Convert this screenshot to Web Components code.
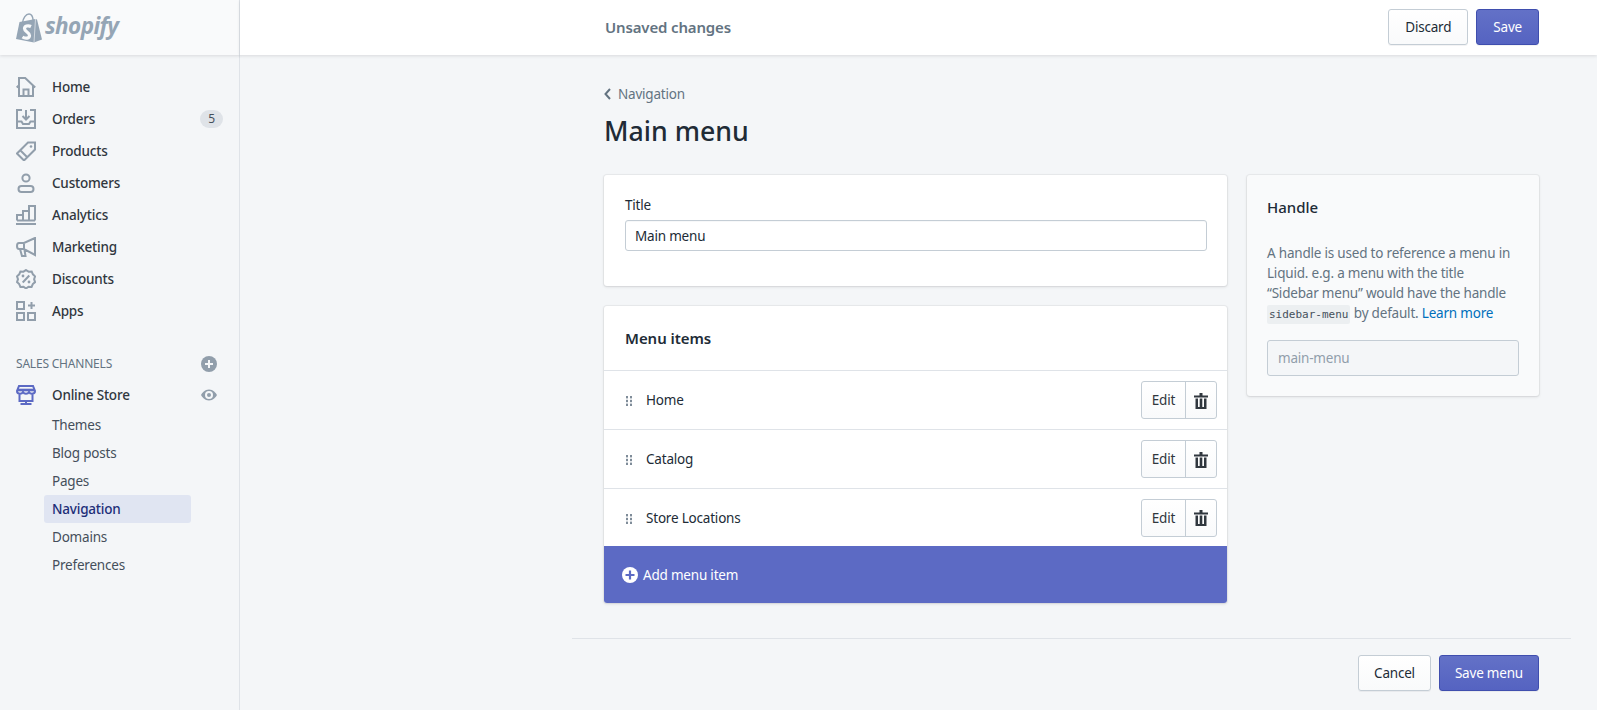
<!DOCTYPE html>
<html>
<head>
<meta charset="utf-8">
<title>Main menu</title>
<style>
  html, body { margin: 0; height: 100%; }
  body {
    font-family: "Noto Sans", "Open Sans", sans-serif;
    font-size: 13.5px;
    letter-spacing: -.2px;
    color: #212b36;
    background: #f4f6f8;
    overflow: hidden;
  }
  svg { display: block; }
</style>
</head>
<body>

<admin-shell>
  <admin-sidebar slot="sidebar">
    <nav-item label="Home">
      <svg viewBox="0 0 20 20" width="20" height="20" fill="none" stroke="#919eab" stroke-width="2"><path d="M.7 10.500 3 8.300V1h6.200l10 9.500M3 8v11h14V9M7.500 19v-6.500h5V19"/></svg>
    </nav-item>
    <nav-item label="Orders" badge="5">
      <svg viewBox="0 0 20 20" width="20" height="20" fill="none" stroke="#919eab" stroke-width="2"><path d="M6 1H1v18h18V1h-5M1 12.500h4.500l1.500 2.500h6l1.500-2.500H19M10 1v9M6.500 7l3.500 3.500L13.500 7"/></svg>
    </nav-item>
    <nav-item label="Products">
      <svg viewBox="0 0 20 20" width="20" height="20" fill="none" stroke="#919eab" stroke-width="2"><path d="M12 1.500h7v7L8 19.500 1 12.500zM4.500 9.500l7 7"/><circle cx="15" cy="5.500" r="1.300" fill="#919eab" stroke="none"/></svg>
    </nav-item>
    <nav-item label="Customers">
      <svg viewBox="0 0 20 20" width="20" height="20" fill="none" stroke="#919eab" stroke-width="2"><circle cx="10" cy="5" r="3.600"/><rect x="2.500" y="13" width="15" height="6" rx="3"/></svg>
    </nav-item>
    <nav-item label="Analytics">
      <svg viewBox="0 0 20 20" width="20" height="20" fill="none" stroke="#919eab" stroke-width="2"><path d="M1 15.500h18M1 15.500V10h6v5.500M7 15.500V6h6v9.500M13 15.500V1h6v14.500"/><path d="M0 19h20"/></svg>
    </nav-item>
    <nav-item label="Marketing">
      <svg viewBox="0 0 20 20" width="20" height="20" fill="none" stroke="#919eab" stroke-width="2"><path d="M19 1 8 6H3C1.500 6 1 7 1 9s.5 3 2 3h5l11 6zM8 6v6M4 12l2 7h3.500L8.500 13"/></svg>
    </nav-item>
    <nav-item label="Discounts">
      <svg viewBox="0 0 20 20" width="20" height="20" fill="none" stroke="#919eab" stroke-width="2"><path d="M10 1l2.600 1.700 3.100-.2 1.200 2.800 2.200 2.100-1 2.800 1 2.900-2.300 2-1.200 2.800-3.100-.2L10 19.500l-2.500-1.800-3.100.2-1.200-2.800-2.200-2 1-2.900-1-2.800 2.200-2.100 1.200-2.800 3.100.2z"/><path d="M6.700 13.500l6.600-7"/><circle cx="7" cy="7" r="1.400" fill="#919eab" stroke="none"/><circle cx="13" cy="13" r="1.400" fill="#919eab" stroke="none"/></svg>
    </nav-item>
    <nav-item label="Apps">
      <svg viewBox="0 0 20 20" width="20" height="20" fill="none" stroke="#919eab" stroke-width="2"><path d="M1 1h7v7H1zM1 12h7v7H1zM12 12h7v7h-7zM15.500 1v7M12 4.500h7"/></svg>
    </nav-item>

    <channel-heading>SALES CHANNELS</channel-heading>

    <nav-item label="Online Store" strong>
      <svg viewBox="0 0 20 20" width="20" height="20" fill="none" stroke="#5c6ac4" stroke-width="2"><path d="M3 1h14l2 5c0 1.800-1.500 2.800-3 2.800S13.500 8 13 7c-.5 1-1.500 1.800-3 1.800S7.500 8 7 7C6.500 8 5.500 8.800 4 8.800S1 7.800 1 6zM3.500 9v7h13V9M10 16v3M4.500 19h11"/><path d="M1.500 5h17" stroke-width="2.600"/></svg>
      <svg slot="action" viewBox="0 0 16 16" width="16" height="16"><path fill="#919eab" fill-rule="evenodd" d="M8 2.500C3.800 2.500 1 6 0 8c1 2 3.800 5.500 8 5.500S15 10 16 8c-1-2-3.800-5.500-8-5.500zM8 12a4 4 0 1 1 0-8 4 4 0 0 1 0 8zm0-6a2 2 0 1 0 0 4 2 2 0 0 0 0-4z"/></svg>
    </nav-item>
    <sub-item>Themes</sub-item>
    <sub-item>Blog posts</sub-item>
    <sub-item>Pages</sub-item>
    <sub-item selected>Navigation</sub-item>
    <sub-item>Domains</sub-item>
    <sub-item>Preferences</sub-item>
  </admin-sidebar>

  <save-bar slot="topbar"></save-bar>

  <page-layout>
    <page-header back="Navigation" title="Main menu"></page-header>
    <div style="display:grid;grid-template-columns:623px 292px;column-gap:20px;align-items:start">
      <div style="display:flex;flex-direction:column;gap:20px">
        <title-card label="Title" value="Main menu"></title-card>
        <menu-card heading="Menu items">
          <menu-row>Home</menu-row>
          <menu-row>Catalog</menu-row>
          <menu-row>Store Locations</menu-row>
        </menu-card>
      </div>
      <handle-card></handle-card>
    </div>
    <page-footer></page-footer>
  </page-layout>
</admin-shell>

<template id="admin-shell-tpl">
  <style>
    :host { display: grid; grid-template-columns: 240px 1fr; grid-template-rows: 55px 1fr; height: 710px; }
    .logo { background: #f9fafb; border-right: 1px solid #dfe3e8; box-shadow: 0 1px 3px rgba(63,63,68,.15); display: flex; align-items: center; padding-left: 16px; gap: 3px; position: relative; z-index: 1; }
    .word { font: italic 700 22.5px/1 "Noto Sans", sans-serif; color: #95a5b5; letter-spacing: -.6px; padding-bottom: 2px; }
    .bar { background: #fff; box-shadow: 0 1px 3px rgba(63,63,68,.15); position: relative; z-index: 1; }
    .side { border-right: 1px solid #dfe3e8; }
    main { overflow: hidden; }
  </style>
  <div class="logo">
    <svg viewBox="0 0 26 30" width="26" height="30">
      <path fill="none" stroke="#95a5b5" stroke-width="1.500" d="M6.500 10C7 5 10 1 13 1c2.500 0 3.800 2.500 4.200 6.500"/>
      <path fill="#95a5b5" d="M3.500 9 19.500 6 21 6.500 26 26.500 18 29.500 0 26z"/>
      <path fill="none" stroke="#f9fafb" stroke-width=".6" d="M19.500 6 18 29.500"/>
      <path fill="none" stroke="#f9fafb" stroke-width="3.200" d="M15 13.500C12 12 8.500 13 8.500 15.500c0 3.500 5 3.500 5 7 0 3-4 3.500-7 1.500"/>
    </svg>
    <span class="word">shopify</span>
  </div>
  <div class="bar"><slot name="topbar"></slot></div>
  <div class="side"><slot name="sidebar"></slot></div>
  <main><slot></slot></main>
</template>

<template id="admin-sidebar-tpl">
  <style>
    :host { display: block; padding-top: 16px; }
  </style>
  <slot></slot>
</template>

<template id="nav-item-tpl">
  <style>
    :host { display: flex; align-items: center; height: 32px; padding-left: 16px; color: #30373e; font-weight: 500; }
    .icon { width: 20px; height: 20px; margin-right: 16px; }
    .label { flex: 1; }
    .badge { background: #dfe3e8; color: #454f5b; border-radius: 10px; font-size: 12px; font-weight: 400; line-height: 18px; width: 23px; text-align: center; margin-right: 16px; }
    .action { margin-right: 22px; }
  </style>
  <div class="icon"><slot></slot></div>
  <span class="label"></span>
  <div class="action"><slot name="action"></slot></div>
</template>

<template id="channel-heading-tpl">
  <style>
    :host { display: flex; align-items: center; justify-content: space-between; height: 31px; margin-top: 21px; padding: 0 22px 0 16px; font-size: 12px; color: #637381; }
  </style>
  <slot></slot>
  <svg viewBox="0 0 16 16" width="16" height="16"><circle cx="8" cy="8" r="8" fill="#919eab"/><path d="M8 4v8M4 8h8" stroke="#f4f6f8" stroke-width="2"/></svg>
</template>

<template id="sub-item-tpl">
  <style>
    :host { display: block; height: 28px; margin: 0 48px 0 44px; padding-left: 8px; line-height: 28px; color: #454f5b; border-radius: 3px; }
    :host([selected]) { background: #e0e5f2; color: #202e78; font-weight: 500; }
  </style>
  <slot></slot>
</template>

<template id="save-bar-tpl">
  <style>
    :host { display: flex; align-items: center; box-sizing: border-box; height: 55px; padding: 0 58px 1px 365px; gap: 8px; }
    .msg { flex: 1; font-size: 15px; font-weight: 600; letter-spacing: -.15px; color: #637381; }
  </style>
  <span class="msg">Unsaved changes</span>
  <ui-button>Discard</ui-button>
  <ui-button primary>Save</ui-button>
</template>

<template id="ui-button-tpl">
  <style>
    :host { display: inline-flex; align-items: center; justify-content: center; box-sizing: border-box; height: 36px; padding: 0 16px; border: 1px solid #c4cdd5; border-radius: 3px; background: linear-gradient(#fff, #f9fafb); color: #212b36; box-shadow: 0 1px 0 rgba(22,29,37,.05); }
    :host([primary]) { background: linear-gradient(#6371c7, #5563c1); border-color: #3f4eae; color: #fff; }
  </style>
  <slot></slot>
</template>

<template id="page-layout-tpl">
  <style>
    :host { display: block; padding: 0 58px 0 364px; }
  </style>
  <slot></slot>
</template>

<template id="page-header-tpl">
  <style>
    :host { display: block; padding-top: 30px; height: 120px; box-sizing: border-box; }
    .back { display: flex; align-items: center; gap: 7px; color: #637381; height: 18px; }
    h1 { margin: 12px 0 0; font-size: 26.7px; line-height: 32px; font-weight: 500; letter-spacing: 0; color: #212b36; }
  </style>
  <div class="back">
    <svg viewBox="0 0 7 12" width="7" height="12"><path d="M6 1 1.500 6 6 11" fill="none" stroke="#637381" stroke-width="2"/></svg>
    <span class="back-label"></span>
  </div>
  <h1></h1>
</template>

<template id="title-card-tpl">
  <style>
    :host { display: block; box-sizing: border-box; height: 111px; padding: 20px 20px 0 21px; background: #fff; border-radius: 3px; box-shadow: 0 0 0 1px rgba(63,63,68,.05), 0 1px 3px rgba(63,63,68,.15); }
    label { display: block; height: 25px; line-height: 20px; }
    .input { box-sizing: border-box; height: 31px; line-height: 30px; padding: 0 9px; border: 1px solid #c4cdd5; border-radius: 3px; box-shadow: inset 0 1px 0 rgba(99,115,129,.05); }
  </style>
  <label></label>
  <div class="input"></div>
</template>

<template id="menu-card-tpl">
  <style>
    :host { display: block; background: #fff; border-radius: 3px; overflow: hidden; box-shadow: 0 0 0 1px rgba(63,63,68,.05), 0 1px 3px rgba(63,63,68,.15); }
    h2 { margin: 0; line-height: 64px; padding-left: 21px; font-size: 15px; font-weight: 600; letter-spacing: -.05px; border-bottom: 1px solid #dfe3e8; box-sizing: border-box; height: 65px; }
    .add { display: flex; align-items: center; gap: 5px; height: 57px; padding-left: 18px; background: #5c6ac4; color: #fff; }
  </style>
  <h2></h2>
  <slot></slot>
  <div class="add">
    <svg viewBox="0 0 16 16" width="16" height="16"><circle cx="8" cy="8" r="8" fill="#fff"/><path d="M8 3.500v9M3.500 8h9" stroke="#5c6ac4" stroke-width="2.200"/></svg>
    <span>Add menu item</span>
  </div>
</template>

<template id="menu-row-tpl">
  <style>
    :host { display: flex; align-items: center; box-sizing: border-box; height: 59px; padding: 0 10px 0 22px; border-bottom: 1px solid #dfe3e8; }
    :host(:last-of-type) { border-bottom: 0; height: 57px; }
    .grip { margin-right: 14px; margin-top: 2px; }
    .name { flex: 1; }
    .group { display: flex; border: 1px solid #c4cdd5; border-radius: 3px; box-sizing: border-box; background: linear-gradient(#fff, #f9fafb); height: 38px; }
    .edit { width: 43px; line-height: 36px; text-align: center; border-right: 1px solid #c4cdd5; color: #30373e; }
    .del { width: 30px; display: flex; align-items: center; justify-content: center; padding-top: 1px; box-sizing: border-box; }
  </style>
  <svg class="grip" viewBox="0 0 6 10" width="6" height="10" fill="#7f8c99"><rect width="2" height="2.400"/><rect x="4" width="2" height="2.400"/><rect y="3.800" width="2" height="2.400"/><rect x="4" y="3.800" width="2" height="2.400"/><rect y="7.600" width="2" height="2.400"/><rect x="4" y="7.600" width="2" height="2.400"/></svg>
  <span class="name"><slot></slot></span>
  <div class="group">
    <div class="edit">Edit</div>
    <div class="del">
      <svg viewBox="0 0 14 16" width="14" height="16"><path fill="#30373e" d="M5.500 0h3v2.500H14v2H0v-2h5.500zM1.500 5.500H4V14h1.700V5.500h2.600V14H10V5.500h2.500V16h-11z"/></svg>
    </div>
  </div>
</template>

<template id="handle-card-tpl">
  <style>
    :host { display: block; box-sizing: border-box; height: 221px; padding: 20px 20px 0 20px; background: #f9fafb; border-radius: 3px; box-shadow: 0 0 0 1px rgba(63,63,68,.05), 0 1px 3px rgba(63,63,68,.15); }
    h3 { margin: 0 0 24px; font-size: 15px; font-weight: 500; line-height: 24px; letter-spacing: 0; }
    p { margin: 0; padding-right: 5px; line-height: 20px; color: #637381; }
    code { font-family: "DejaVu Sans Mono", monospace; font-size: 11px; line-height: 1; letter-spacing: 0; white-space: nowrap; background: #eceff1; padding: 3px 2px; border-radius: 2px; color: #454f5b; }
    a { color: #006fbb; }
    .field { box-sizing: border-box; height: 36px; line-height: 34px; margin-top: 17px; padding: 0 10px; border: 1px solid #c4cdd5; border-radius: 3px; background: #f4f6f8; color: #919eab; }
  </style>
  <h3>Handle</h3>
  <p>A handle is used to reference a menu in Liquid. e.g. a menu with the title “Sidebar menu” would have the handle <code>sidebar-menu</code> by default. <a>Learn more</a></p>
  <div class="field">main-menu</div>
</template>

<template id="page-footer-tpl">
  <style>
    :host { display: flex; justify-content: flex-end; gap: 8px; margin: 35px -32px 0; padding: 16px 32px 0; border-top: 1px solid #dfe3e8; }
    ui-button { padding: 0 15px; }
  </style>
  <ui-button>Cancel</ui-button>
  <ui-button primary>Save menu</ui-button>
</template>

<script>
  // every element just clones its template, the few with data fill it in after
  class Base extends HTMLElement {
    constructor() {
      super();
      const tpl = document.getElementById(this.localName + "-tpl");
      this.attachShadow({ mode: "open" }).appendChild(tpl.content.cloneNode(true));
    }
  }

  class NavItem extends Base {
    connectedCallback() {
      const s = this.shadowRoot;
      s.querySelector(".label").textContent = this.getAttribute("label");
      if (this.hasAttribute("badge")) {
        const b = document.createElement("span");
        b.className = "badge";
        b.textContent = this.getAttribute("badge");
        s.querySelector(".action").replaceWith(b);
      }
    }
  }

  class PageHeader extends Base {
    connectedCallback() {
      this.shadowRoot.querySelector(".back-label").textContent = this.getAttribute("back");
      this.shadowRoot.querySelector("h1").textContent = this.getAttribute("title");
    }
  }

  class TitleCard extends Base {
    connectedCallback() {
      this.shadowRoot.querySelector("label").textContent = this.getAttribute("label");
      this.shadowRoot.querySelector(".input").textContent = this.getAttribute("value");
    }
  }

  class MenuCard extends Base {
    connectedCallback() {
      this.shadowRoot.querySelector("h2").textContent = this.getAttribute("heading");
    }
  }

  const plain = ["admin-shell", "admin-sidebar", "channel-heading", "sub-item", "save-bar", "ui-button", "page-layout", "menu-row", "handle-card", "page-footer"];
  plain.forEach((name) => customElements.define(name, class extends Base {}));
  customElements.define("nav-item", NavItem);
  customElements.define("page-header", PageHeader);
  customElements.define("title-card", TitleCard);
  customElements.define("menu-card", MenuCard);
</script>
</body>
</html>
